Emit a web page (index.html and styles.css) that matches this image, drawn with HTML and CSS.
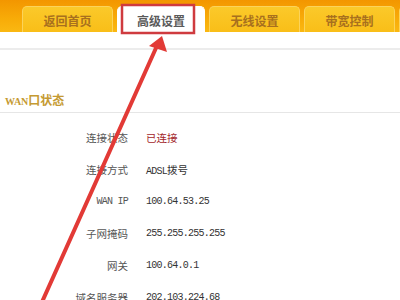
FILE: index.html
```html
<!DOCTYPE html>
<html lang="zh-CN">
<head>
<meta charset="utf-8">
<title>WAN口状态</title>
<link rel="stylesheet" href="styles.css">
</head>
<body>
<header class="header">
  <nav class="tabs">
    <a class="tab">返回首页</a>
    <a class="tab active">高级设置</a>
    <a class="tab">无线设置</a>
    <a class="tab">带宽控制</a>
    <a class="tab stub"></a>
  </nav>
</header>
<div class="sep"></div>
<section class="wan">
  <h2 class="title"><span class="en">WAN</span>口状态</h2>
  <dl class="rows">
    <dt>连接状态</dt><dd class="ok">已连接</dd>
    <dt>连接方式</dt><dd><span class="mono">ADSL</span>拨号</dd>
    <dt class="mono">WAN IP</dt><dd class="mono">100.64.53.25</dd>
    <dt>子网掩码</dt><dd class="mono">255.255.255.255</dd>
    <dt>网关</dt><dd class="mono">100.64.0.1</dd>
    <dt>域名服务器</dt><dd class="mono">202.103.224.68</dd>
  </dl>
</section>
<svg class="annot" width="400" height="300" viewBox="0 0 400 300">
  <rect x="122" y="5" width="72" height="28" fill="none" stroke="#cf3b3f" stroke-width="2.5"/>
  <line x1="42" y1="302" x2="156" y2="48" stroke="#e23a36" stroke-width="4" stroke-linecap="round"/>
  <polygon points="162,36 167,52 149,46" fill="#e23a36"/>
</svg>
</body>
</html>
```

FILE: styles.css
```css
html, body {
  margin: 0;
  padding: 0;
  background: #ffffff;
  width: 400px;
  height: 300px;
  overflow: hidden;
  font-family: "Noto Sans CJK SC", "Liberation Sans", sans-serif;
  position: relative;
}

.header {
  height: 32px;
  background: linear-gradient(#f39600, #f8ac08 60%, #fab812);
  display: flex;
  align-items: flex-end;
}

.tabs {
  display: flex;
  align-items: flex-end;
  padding-left: 22px;
  gap: 4px;
}

.tab {
  box-sizing: border-box;
  width: 91px;
  height: 26px;
  display: flex;
  align-items: center;
  justify-content: center;
  background: linear-gradient(#fbc92a, #f9be18);
  border: 1px solid #fcd35a;
  border-bottom: none;
  border-radius: 5px 5px 0 0;
  color: #a8701e;
  font-size: 12px;
  font-weight: 700;
  padding-top: 1px;
}

.tab.active {
  width: 88px;
  background: #ffffff;
  border-color: #ffffff;
  color: #5a5a5a;
}

.tab.stub {
  width: 10px;
}

.sep {
  margin-top: 16px;
  height: 2px;
  background: #ececec;
}

.wan {
  margin-top: 40px;
}

.title {
  margin: 0;
  line-height: 20px;
  padding-left: 5px;
  border-bottom: 1px solid #e6e6e6;
  box-sizing: border-box;
  height: 23px;
  font-size: 12px;
  font-weight: 700;
  color: #c59a32;
  font-family: "Noto Sans CJK SC", sans-serif;
}

.title .en {
  font-family: "Liberation Serif", serif;
  font-size: 10px;
  font-weight: 700;
}

.rows {
  margin: 8px 0 0 0;
  display: grid;
  grid-template-columns: 128px 1fr;
  column-gap: 18px;
  grid-auto-rows: 32px;
  align-items: center;
  font-size: 10.5px;
}

.rows dt {
  text-align: right;
  color: #555555;
}

.rows dd {
  margin: 0;
  color: #333333;
}

.rows .ok {
  color: #a3262b;
}

.mono {
  font-family: "Liberation Mono", monospace;
  font-size: 10px;
  letter-spacing: -0.75px;
}

.annot {
  position: absolute;
  left: 0;
  top: 0;
}
```
